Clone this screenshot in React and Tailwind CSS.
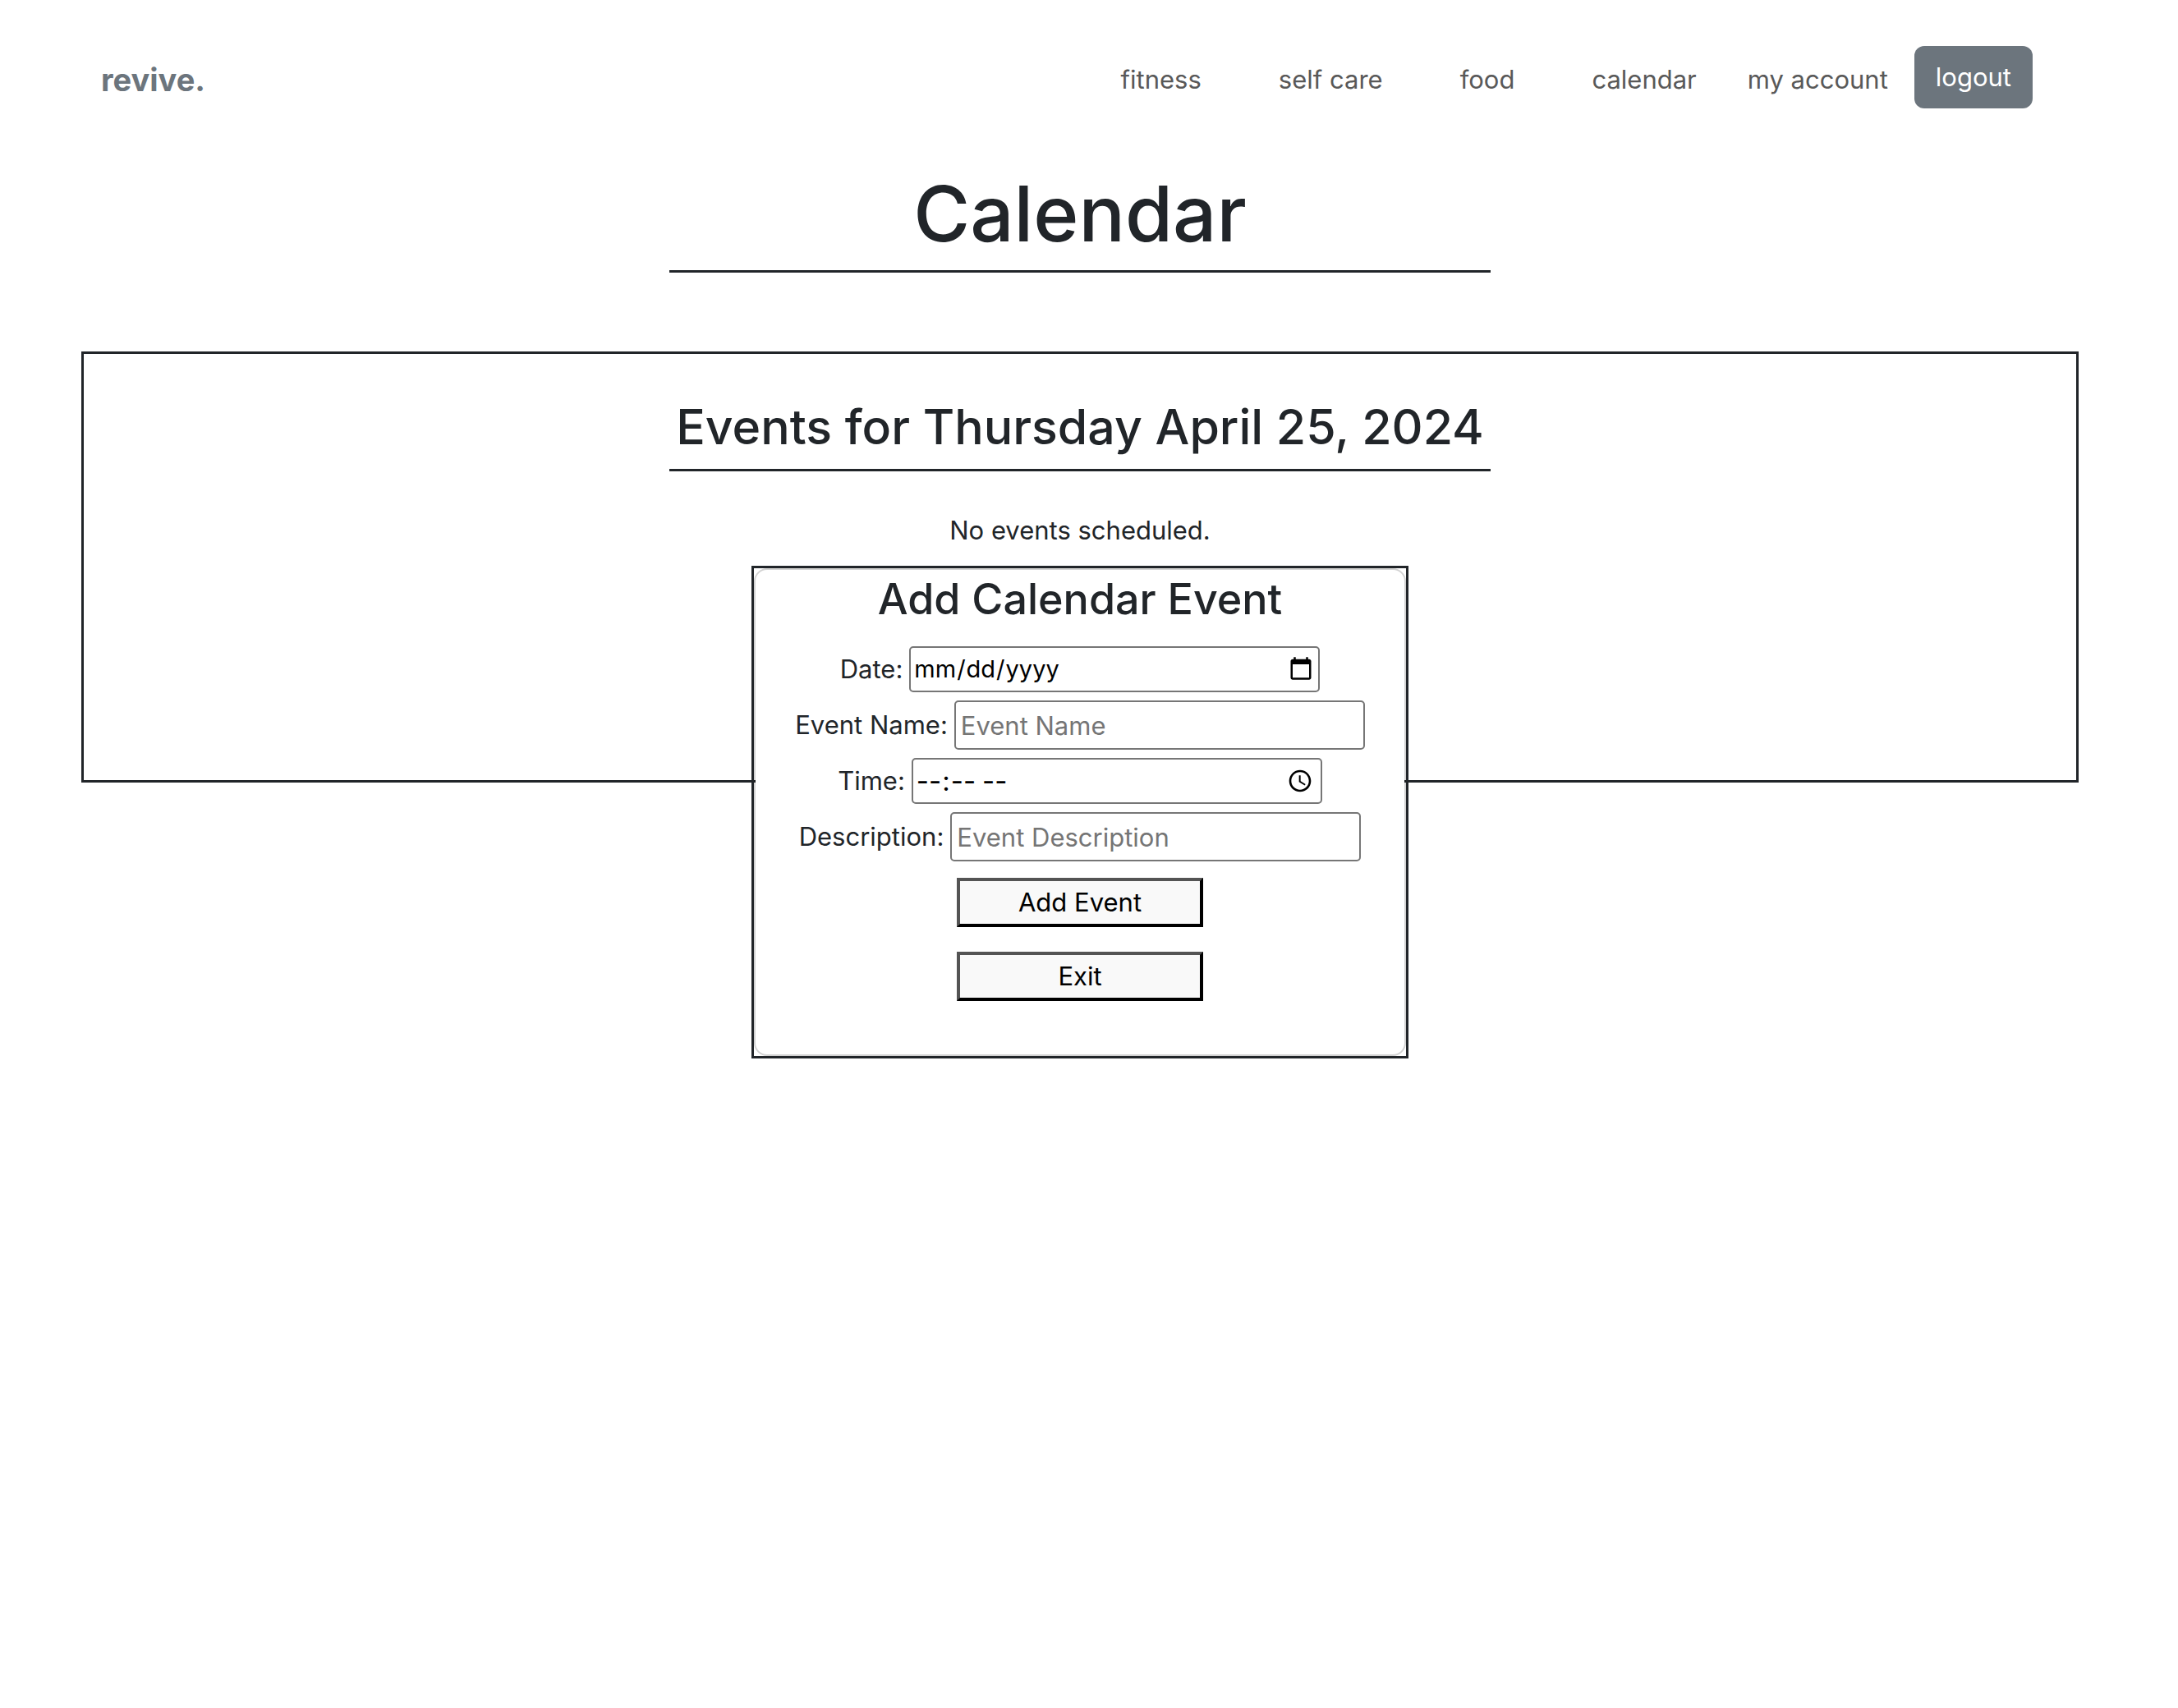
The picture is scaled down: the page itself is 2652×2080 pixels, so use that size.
const links = ["fitness", "self care", "food", "calendar"];

const inputStyles = {
  text: "h-[60px] px-[6px]",
  date: "h-14 px-[3px] text-[29px] [&::-webkit-calendar-picker-indicator]:size-8",
  time: "h-14 pr-[6px] pl-[3px] text-[33px] [&::-webkit-calendar-picker-indicator]:size-8",
};

function Field({ id, label, type, placeholder }) {
  return (
    <div className="flex items-center justify-center gap-2">
      <label htmlFor={id}>{label}</label>
      <input
        id={id}
        type={type}
        placeholder={placeholder}
        className={
          "w-[500px] rounded-[5px] border-2 border-[#767676] bg-white text-black placeholder:text-[#757575] " +
          inputStyles[type]
        }
      />
    </div>
  );
}

function DialogButton({ type, children }) {
  return (
    <button
      type={type}
      className="h-[60px] w-[300px] border-4 border-black bg-[#f9f9f9] text-black [border-style:outset]"
    >
      {children}
    </button>
  );
}

function AddEventDialog() {
  return (
    <div
      role="dialog"
      aria-labelledby="dialog-title"
      className="absolute top-full left-1/2 w-[800px] -translate-x-1/2 border-3 border-[#212529]"
    >
      <form
        onSubmit={(e) => e.preventDefault()}
        className="flex flex-col items-center rounded-2xl border-2 border-black/[0.175] bg-white bg-clip-padding pb-[65px]"
      >
        <h3 id="dialog-title" className="mb-6 pt-[2px] text-[52px] leading-[67px] font-medium">
          Add Calendar Event
        </h3>
        <div className="flex flex-col gap-[10px]">
          <Field id="date" label="Date:" type="date" />
          <Field id="name" label="Event Name:" type="text" placeholder="Event Name" />
          <Field id="time" label="Time:" type="time" />
          <Field id="description" label="Description:" type="text" placeholder="Event Description" />
        </div>
        <div className="mt-5 flex flex-col gap-[30px]">
          <DialogButton type="submit">Add Event</DialogButton>
          <DialogButton type="button">Exit</DialogButton>
        </div>
      </form>
    </div>
  );
}

export default function App() {
  return (
    <div className="min-h-screen bg-white pr-[22px] font-[Inter,sans-serif] text-[31px] leading-[48px] text-[#212529]">
      <header className="flex items-center justify-between pt-14 pr-[155px] pl-[123px]">
        <a href="#" className="pt-1.5 text-[38px] font-bold text-[#6c757d]">revive.</a>
        <nav className="flex items-center text-[#595959]">
          <div className="flex gap-[94px] pt-1.5">
            {links.map((l) => (
              <a key={l} href="#">{l}</a>
            ))}
          </div>
          <a href="#" className="ml-[62px] pt-1.5">my account</a>
          <button type="button" className="ml-8 h-[76px] rounded-xl bg-[#6c757d] px-[26px] text-white">logout</button>
        </nav>
      </header>

      <main>
        <h1 className="mx-auto mt-[68px] max-w-[1000px] border-b-3 border-[#212529] pb-[9px] text-center text-[94px] leading-[120px] font-medium">
          Calendar
        </h1>
        <section className="mx-[99px] mt-24 min-h-[525px] border-3 border-[#212529] pt-[53px] text-center">
          <h2 className="mx-auto max-w-[1000px] border-b-3 border-[#212529] pb-[15px] text-[59px] leading-[72px] font-medium">
            Events for Thursday April 25, 2024
          </h2>
          <div className="relative mt-12 pb-[19px]">
            <p>No events scheduled.</p>
            <AddEventDialog />
          </div>
        </section>
      </main>
    </div>
  );
}
